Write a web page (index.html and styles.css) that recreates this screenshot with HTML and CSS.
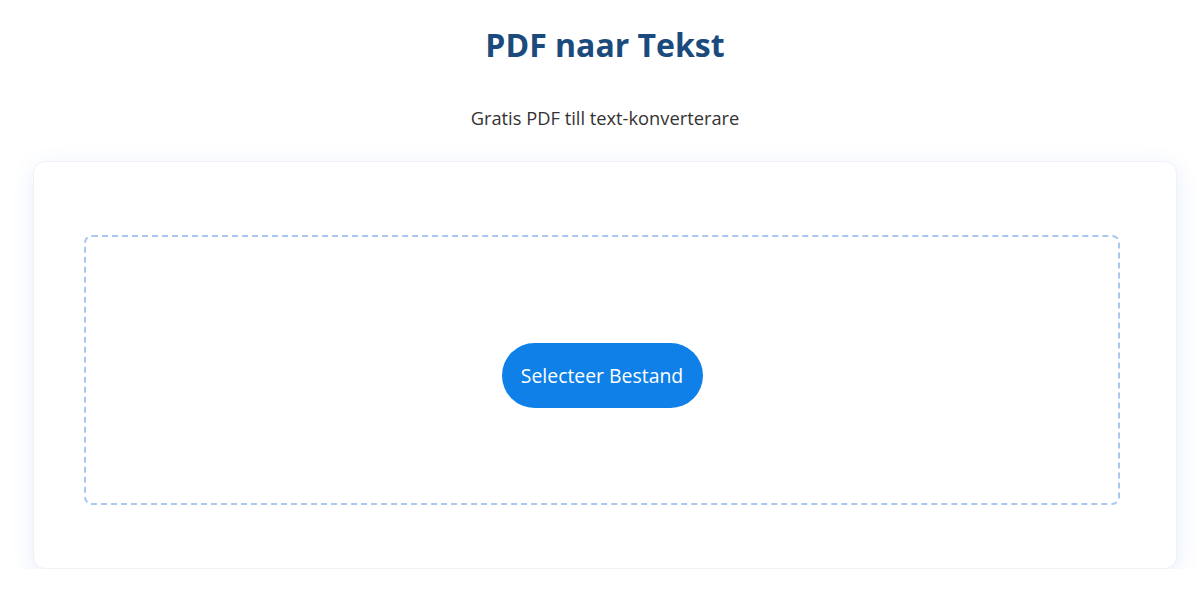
FILE: index.html
```html
<!DOCTYPE html>
<html>
<head>
  <meta charset="utf-8">
  <meta name="viewport" content="width=device-width">
  <title>PDF naar Tekst</title>
  <link rel="stylesheet" href="styles.css">
</head>
<body>
<header class="intro">
  <h1>PDF naar Tekst</h1>
  <p>Gratis PDF till text-konverterare</p>
</header>
<main class="card">
  <div class="dropzone">
    <button class="pick" type="button">Selecteer Bestand</button>
  </div>
</main>
</body>
</html>
```

FILE: styles.css
```css
* {
  box-sizing: border-box;
}

body {
  margin: 0;
  padding: 0 23px 0 33px;
  background-color: #fff;
  font-family: "Open Sans", "Noto Sans", sans-serif;
  color: #333;
}

.intro {
  text-align: center;
  padding-top: 22px;
}

.intro h1 {
  margin: 0;
  font-size: 32px;
  font-weight: 700;
  line-height: 46px;
  color: #1b4a7c;
}

.intro p {
  margin: 38px 0 0;
  font-size: 18.3px;
  line-height: 24px;
  color: #333;
}

/* kaart met uploadzone */
.card {
  margin-top: 31px;
  height: 408px;
  padding: 73px 56px 63px 50px;
  background-color: #fff;
  border: 1px solid #eef1f6;
  border-radius: 12px;
  box-shadow: 0 6px 22px rgba(50, 110, 220, 0.12);
}

.dropzone {
  height: 100%;
  padding-top: 11px;
  display: flex;
  align-items: center;
  justify-content: center;
  border: 2px dashed #a9c7f0;
  border-radius: 8px;
}

.pick {
  width: 201px;
  height: 65px;
  border: 0;
  border-radius: 33px;
  background-color: #0e80e8;
  color: #fff;
  font-family: inherit;
  font-size: 19.4px;
  cursor: pointer;
}
```
